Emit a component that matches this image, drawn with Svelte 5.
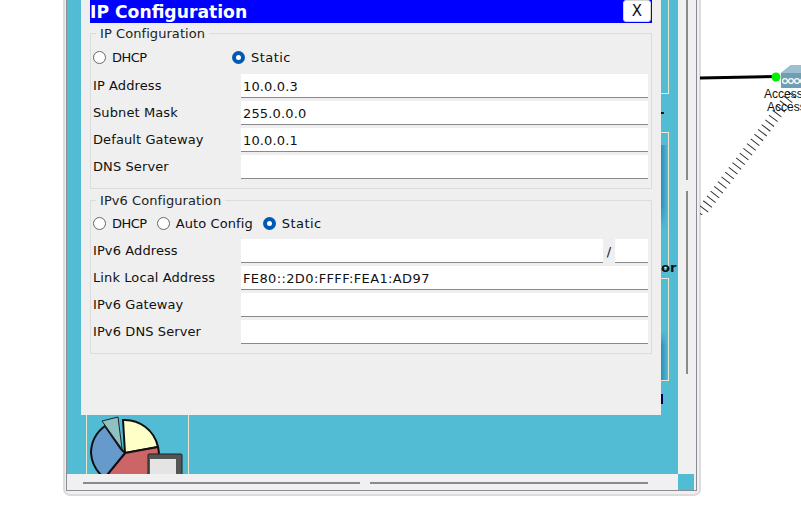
<script>
  const v4 = [
    ['IP Address', '10.0.0.3'],
    ['Subnet Mask', '255.0.0.0'],
    ['Default Gateway', '10.0.0.1'],
    ['DNS Server', '']
  ];
  const v6 = [
    ['Link Local Address', 'FE80::2D0:FFFF:FEA1:AD97', true],
    ['IPv6 Gateway', ''],
    ['IPv6 DNS Server', '']
  ];
</script>

<div class="page">
  <div class="frame">
    <div class="workspace">
      <div class="teal">
        <div class="tile t1"></div>
        <div class="tile t2"><span class="shade s2"></span></div>
        <div class="tile t3"><span class="shade s3"></span></div>
        <span class="tick k1"></span>
        <span class="frag f2">or</span>
        <span class="tick k3"></span>
        <div class="tile t4">
          <svg width="101" height="60" viewBox="0 0 101 60">
            <path d="M36 5 A34 34 0 0 1 71 32 L38 38 Z" fill="#ffffc8" stroke="#111" stroke-width="2"/>
            <path d="M38 38 L71 32 Q73 40 71 50 L64 60 L20 60 Z" fill="#cc6666" stroke="#111" stroke-width="2"/>
            <path d="M38 38 L20 60 L14 60 A34 34 0 0 1 4 38 A34 34 0 0 1 18 11 L34 34 Z" fill="#6699cc" stroke="#111" stroke-width="2"/>
            <path d="M15 6 L31 2 L35 34 Z" fill="#8fc0c4" stroke="#222" stroke-width="1"/>
            <rect x="61" y="39" width="34" height="21" rx="1" fill="#555" stroke="#222"/>
            <rect x="63" y="44" width="26" height="16" fill="#e4e4e4"/>
          </svg>
        </div>

        <div class="dialog">
          <div class="titlebar">
            <span class="title">IP Configuration</span>
            <button class="close">X</button>
          </div>

          <fieldset class="group first">
            <legend>IP Configuration</legend>
            <div class="radios four">
              <label class="radio"><span class="dot"></span><span class="dhcp">DHCP</span></label>
              <label class="radio"><span class="dot on"></span><span class="static">Static</span></label>
            </div>
            {#each v4 as [name, value]}
              <div class="row">
                <span class="name">{name}</span>
                <div class="field">{value}</div>
              </div>
            {/each}
          </fieldset>

          <fieldset class="group second">
            <legend>IPv6 Configuration</legend>
            <div class="radios six">
              <label class="radio"><span class="dot"></span><span class="dhcp">DHCP</span></label>
              <label class="radio"><span class="dot"></span><span class="auto">Auto Config</span></label>
              <label class="radio"><span class="dot on"></span><span class="static">Static</span></label>
            </div>
            <div class="row">
              <span class="name">IPv6 Address</span>
              <div class="field"></div>
              <span class="slash">/</span>
              <div class="field prefix"></div>
            </div>
            {#each v6 as [name, value, wide]}
              <div class="row">
                <span class="name">{name}</span>
                <div class="field" class:wide>{value}</div>
              </div>
            {/each}
          </fieldset>
        </div>
      </div>

      <div class="vbar">
        <span class="thumb top"></span>
        <span class="thumb bottom"></span>
      </div>

      <div class="hbar">
        <span class="hthumb a"></span>
        <span class="hthumb b"></span>
      </div>
      <div class="corner"></div>
    </div>
  </div>

  <div class="canvas">
    <svg width="101" height="215" viewBox="0 0 101 215">
      <path d="M0 78 L75 76.5" stroke="#000" stroke-width="3" fill="none"/>
      <path d="M81 73 L91 65 H101 V88 H81 Z" fill="#6f9fb2"/>
      <path d="M81 73 L91 65 H101 V73 Z" fill="#9cc0cf"/>
      <circle cx="85" cy="81" r="2.4" stroke="#fff" stroke-width="1.2" fill="none"/>
      <circle cx="91" cy="81" r="2.4" stroke="#fff" stroke-width="1.2" fill="none"/>
      <circle cx="97" cy="81" r="2.4" stroke="#fff" stroke-width="1.2" fill="none"/>
      <circle cx="103" cy="81" r="2.4" stroke="#fff" stroke-width="1.2" fill="none"/>
      <path d="M0 214 L92 94" stroke="#333" stroke-width="11" stroke-dasharray="1 5" fill="none"/>
      <circle cx="76" cy="77" r="4.5" fill="#00f000"/>
    </svg>
    <span class="dev d1">Access</span>
    <span class="dev d2">Access</span>
  </div>
</div>

<style>
  :global(body) {
    margin: 0;
    background: #fff;
  }

  .page {
    position: relative;
    width: 801px;
    height: 519px;
    overflow: hidden;
    background: #fff;
    font-family: "DejaVu Sans", sans-serif;
    font-size: 13px;
    color: #111;
  }

  .frame {
    position: absolute;
    left: 63px;
    top: -4px;
    width: 638px;
    height: 500px;
    box-sizing: border-box;
    border: 2px solid #dcdcdc;
    border-top: 0;
    border-radius: 0 0 7px 7px;
    background: #f0f0f0;
    padding: 0 2px 4px 2px;
  }

  .workspace {
    display: grid;
    grid-template-columns: 611px 16px;
    grid-template-rows: 478px 16px;
    width: 629px;
    height: 494px;
    outline: 1px solid #8a8d96;
    background: #f0f0f0;
  }

  .teal {
    position: relative;
    background: #53bcd5;
    overflow: hidden;
  }

  .tile {
    position: absolute;
    box-sizing: border-box;
    border: 1px solid #ece6cf;
  }

  .t1 {
    left: 100px;
    right: 9px;
    top: -10px;
    height: 108px;
  }

  .t2 {
    left: 100px;
    right: 9px;
    top: 136px;
    height: 136px;
    overflow: hidden;
  }

  .t3 {
    left: 100px;
    right: 9px;
    top: 282px;
    height: 103px;
    overflow: hidden;
  }

  .shade {
    position: absolute;
    right: 0;
    width: 7px;
    background: linear-gradient(90deg, #2b8dbb, #53bcd5);
  }

  .s2 {
    top: 12px;
    height: 86px;
    mask-image: linear-gradient(180deg, #000 70%, transparent);
  }

  .s3 {
    top: 52px;
    height: 50px;
    mask-image: linear-gradient(0deg, #000 70%, transparent);
  }

  .t4 {
    left: 19px;
    top: 419px;
    width: 103px;
    height: 60px;
    border-top: 0;
    border-bottom: 0;
    line-height: 0;
  }

  .frag {
    position: absolute;
    font-weight: 700;
    color: #111;
    font-size: 13px;
  }

  .f2 { left: 594px; top: 264px; }

  .tick {
    position: absolute;
    left: 594px;
    background: #111;
  }

  .k1 { top: 116px; width: 3px; height: 2px; }
  .k3 { top: 398px; width: 2px; height: 10px; background: #000055; }

  .dialog {
    position: absolute;
    left: 14px;
    top: 4px;
    width: 580px;
    height: 415px;
    box-sizing: border-box;
    background: #efefef;
    padding: 0 9px;
  }

  .titlebar {
    display: flex;
    align-items: center;
    justify-content: space-between;
    height: 23px;
    background: #0000ff;
    color: #fff;
    margin-bottom: 10px;
  }

  .title {
    font-size: 17.2px;
    font-weight: 700;
    line-height: 23px;
    padding-top: 1px;
  }

  .close {
    width: 28px;
    height: 22px;
    margin: 0 1px 1px 0;
    padding: 0;
    border: 1px solid #d5d5d5;
    border-radius: 3px;
    background: #fff;
    color: #111;
    font: 15px "DejaVu Sans", sans-serif;
  }

  .group {
    margin: 0;
    padding: 0 3px 0 2px;
    border: 1px solid #dcdcdc;
    box-sizing: border-box;
    min-width: 0;
    position: relative;
  }

  .first {
    height: 156px;
    margin-bottom: 11px;
  }

  .second {
    height: 154px;
  }

  legend {
    position: absolute;
    top: -7px;
    left: 0;
    margin-left: 5px;
    padding: 0 4px;
    font-size: 13px;
    line-height: 14px;
    color: #222;
    background: #efefef;
    letter-spacing: 0.07px;
  }

  .radios {
    display: flex;
    align-items: center;
    height: 20px;
    margin-top: 13px;
    margin-bottom: 7px;
  }

  .four .radio:first-child {
    width: 139px;
  }

  .six {
    margin-top: 12px;
    margin-bottom: 6px;
    gap: 10px;
  }

  .radio {
    display: flex;
    align-items: center;
    gap: 6px;
  }

  .dhcp {
    letter-spacing: -0.5px;
  }

  .auto {
    letter-spacing: 0.1px;
  }

  .static {
    letter-spacing: 0.45px;
  }

  .dot {
    width: 11px;
    height: 11px;
    border: 1px solid #666;
    border-radius: 50%;
    background: #fff;
    box-sizing: content-box;
  }

  .dot.on {
    border: 4px solid #0059b3;
    width: 5px;
    height: 5px;
  }

  .row {
    display: flex;
    align-items: center;
    height: 24px;
    margin-bottom: 3px;
    letter-spacing: 0.1px;
  }

  .name {
    width: 148px;
    flex: none;
    padding-bottom: 2px;
  }

  .field {
    flex: 1;
    height: 24px;
    box-sizing: border-box;
    background: #fff;
    border-bottom: 1px solid #8a8a8a;
    padding: 4px 2px 0;
    line-height: 18px;
    letter-spacing: 0.15px;
  }

  .field.wide {
    letter-spacing: 0.37px;
  }

  .slash {
    width: 12px;
    text-align: center;
  }

  .prefix {
    flex: none;
    width: 33px;
  }

  .vbar {
    position: relative;
    background: #f0f0f0;
  }

  .thumb {
    position: absolute;
    left: 8px;
    width: 2px;
    background: #8a8a8a;
  }

  .top {
    top: 0;
    height: 184px;
  }

  .bottom {
    top: 195px;
    height: 183px;
  }

  .hbar {
    position: relative;
    background: #f0f0f0;
  }

  .hthumb {
    position: absolute;
    top: 8px;
    height: 2px;
    background: #8a8a8a;
  }

  .a {
    left: 16px;
    width: 277px;
  }

  .b {
    left: 303px;
    width: 278px;
  }

  .corner {
    background: #53bcd5;
  }

  .canvas {
    position: absolute;
    left: 700px;
    top: 0;
    width: 101px;
    height: 215px;
  }

  .canvas svg {
    display: block;
  }

  .dev {
    position: absolute;
    font: 12px "Liberation Sans", sans-serif;
    color: #111;
    white-space: nowrap;
  }

  .d1 { left: 64px; top: 87px; }
  .d2 { left: 67px; top: 100px; }
</style>
